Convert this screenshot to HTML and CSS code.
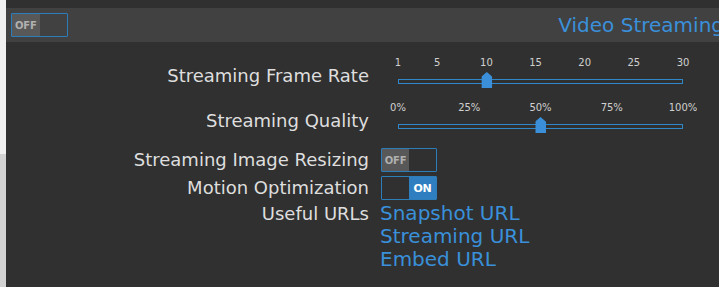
FILE: index.html
```html
<!DOCTYPE html>
<html>
  <head>
    <meta name="viewport" content="width=device-width, initial-scale=1">
    <link rel="stylesheet" href="styles.css">
  </head>
  <body>
    <div class="page">
      <div class="gutter">
        <div class="gutter-top"></div>
        <div class="gutter-bottom"></div>
      </div>
      <div class="panel">
        <div class="panel-header">
          <div class="switch switch-off header-switch">
            <span class="switch-half">OFF</span>
            <span class="switch-half"></span>
          </div>
          <div class="panel-title">Video Streaming</div>
        </div>

        <div class="settings">
          <div class="setting slider-row">
            <div class="setting-label">Streaming Frame Rate</div>
            <div class="slider">
              <div class="slider-ticks">
                <span class="tick" style="left:0%">1</span>
                <span class="tick" style="left:13.79%">5</span>
                <span class="tick" style="left:31.03%">10</span>
                <span class="tick" style="left:48.28%">15</span>
                <span class="tick" style="left:65.52%">20</span>
                <span class="tick" style="left:82.76%">25</span>
                <span class="tick" style="left:100%">30</span>
              </div>
              <div class="slider-track">
                <span class="slider-handle" style="left:31.03%"></span>
              </div>
            </div>
          </div>

          <div class="setting slider-row">
            <div class="setting-label">Streaming Quality</div>
            <div class="slider">
              <div class="slider-ticks">
                <span class="tick" style="left:0%">0%</span>
                <span class="tick" style="left:25%">25%</span>
                <span class="tick" style="left:50%">50%</span>
                <span class="tick" style="left:75%">75%</span>
                <span class="tick" style="left:100%">100%</span>
              </div>
              <div class="slider-track">
                <span class="slider-handle" style="left:50%"></span>
              </div>
            </div>
          </div>

          <div class="setting switch-row">
            <div class="setting-label">Streaming Image Resizing</div>
            <div class="switch switch-off">
              <span class="switch-half">OFF</span>
              <span class="switch-half"></span>
            </div>
          </div>

          <div class="setting switch-row">
            <div class="setting-label">Motion Optimization</div>
            <div class="switch switch-on">
              <span class="switch-half"></span>
              <span class="switch-half">ON</span>
            </div>
          </div>

          <div class="setting links-row">
            <div class="setting-label">Useful URLs</div>
            <div class="links">
              <a href="#" class="url-link">Snapshot URL</a>
              <a href="#" class="url-link">Streaming URL</a>
              <a href="#" class="url-link">Embed URL</a>
            </div>
          </div>
        </div>
      </div>
    </div>
  </body>
</html>
```

FILE: styles.css
```css
body {
  margin: 0;
  font-family: "DejaVu Sans", sans-serif;
}

.page {
  display: flex;
  height: 287px;
  overflow: hidden;
}

.gutter {
  width: 6px;
  display: flex;
  flex-direction: column;
}

.gutter-top {
  height: 154px;
  background-color: #f0f0f0;
}

.gutter-bottom {
  flex: 1;
  background-color: #d2d2d2;
}

.panel {
  flex: 1;
  padding-top: 8px;
  background-color: #303030;
  overflow: hidden;
}

.panel-header {
  display: flex;
  align-items: center;
  height: 34px;
  padding-left: 5px;
  background-color: #414141;
  overflow: hidden;
}

.panel-title {
  margin-left: auto;
  margin-right: -5px;
  flex-shrink: 0;
  white-space: nowrap;
  font-size: 20px;
  line-height: 23px;
  color: #3a90da;
}

/* on/off switches */
.switch {
  display: flex;
  width: 56px;
  height: 24px;
  box-sizing: border-box;
  border: 1px solid #2e7dbb;
  border-radius: 1px;
}

.header-switch {
  width: 57px;
}

.switch-half {
  flex: 1;
  display: flex;
  align-items: center;
  justify-content: center;
  font-size: 10px;
  font-weight: bold;
  letter-spacing: -0.2px;
}

.switch-off .switch-half:first-child {
  background-color: #585858;
  color: #b0b0b0;
}

.switch-on .switch-half:last-child {
  background-color: #2f7fc0;
  color: #ffffff;
  font-size: 11px;
}

/* setting rows */
.settings {
  padding-top: 14px;
}

.setting {
  display: grid;
  grid-template-columns: 363px 1fr;
  column-gap: 11px;
}

.setting-label {
  text-align: right;
  font-size: 18px;
  line-height: 20px;
  color: #dedede;
  white-space: nowrap;
}

.slider-row {
  height: 45px;
  align-items: start;
}

.slider-row .setting-label {
  margin-top: 10px;
}

.switch-row {
  height: 28px;
  align-items: center;
}

.switch-row .switch {
  margin-left: 1px;
}

.links-row {
  align-items: baseline;
}

/* sliders */
.slider {
  padding-top: 1px;
  padding-left: 18px;
}

.slider-ticks {
  position: relative;
  width: 285px;
  height: 12px;
}

.tick {
  position: absolute;
  top: 0;
  transform: translateX(-50%);
  font-size: 10px;
  line-height: 12px;
  color: #d0d0d0;
  white-space: nowrap;
}

.slider-track {
  position: relative;
  width: 285px;
  height: 5px;
  margin-top: 10px;
  box-sizing: border-box;
  border: 1px solid #2f86c9;
}

.slider-handle {
  position: absolute;
  top: -8px;
  width: 11px;
  height: 16px;
  transform: translateX(-50%);
  background-color: #3a8fd8;
  clip-path: polygon(50% 0, 100% 30%, 100% 100%, 0 100%, 0 30%);
}

/* links */
.links {
  display: flex;
  flex-direction: column;
}

.url-link {
  font-size: 20px;
  line-height: 23px;
  color: #3a90da;
  text-decoration: none;
}
```
